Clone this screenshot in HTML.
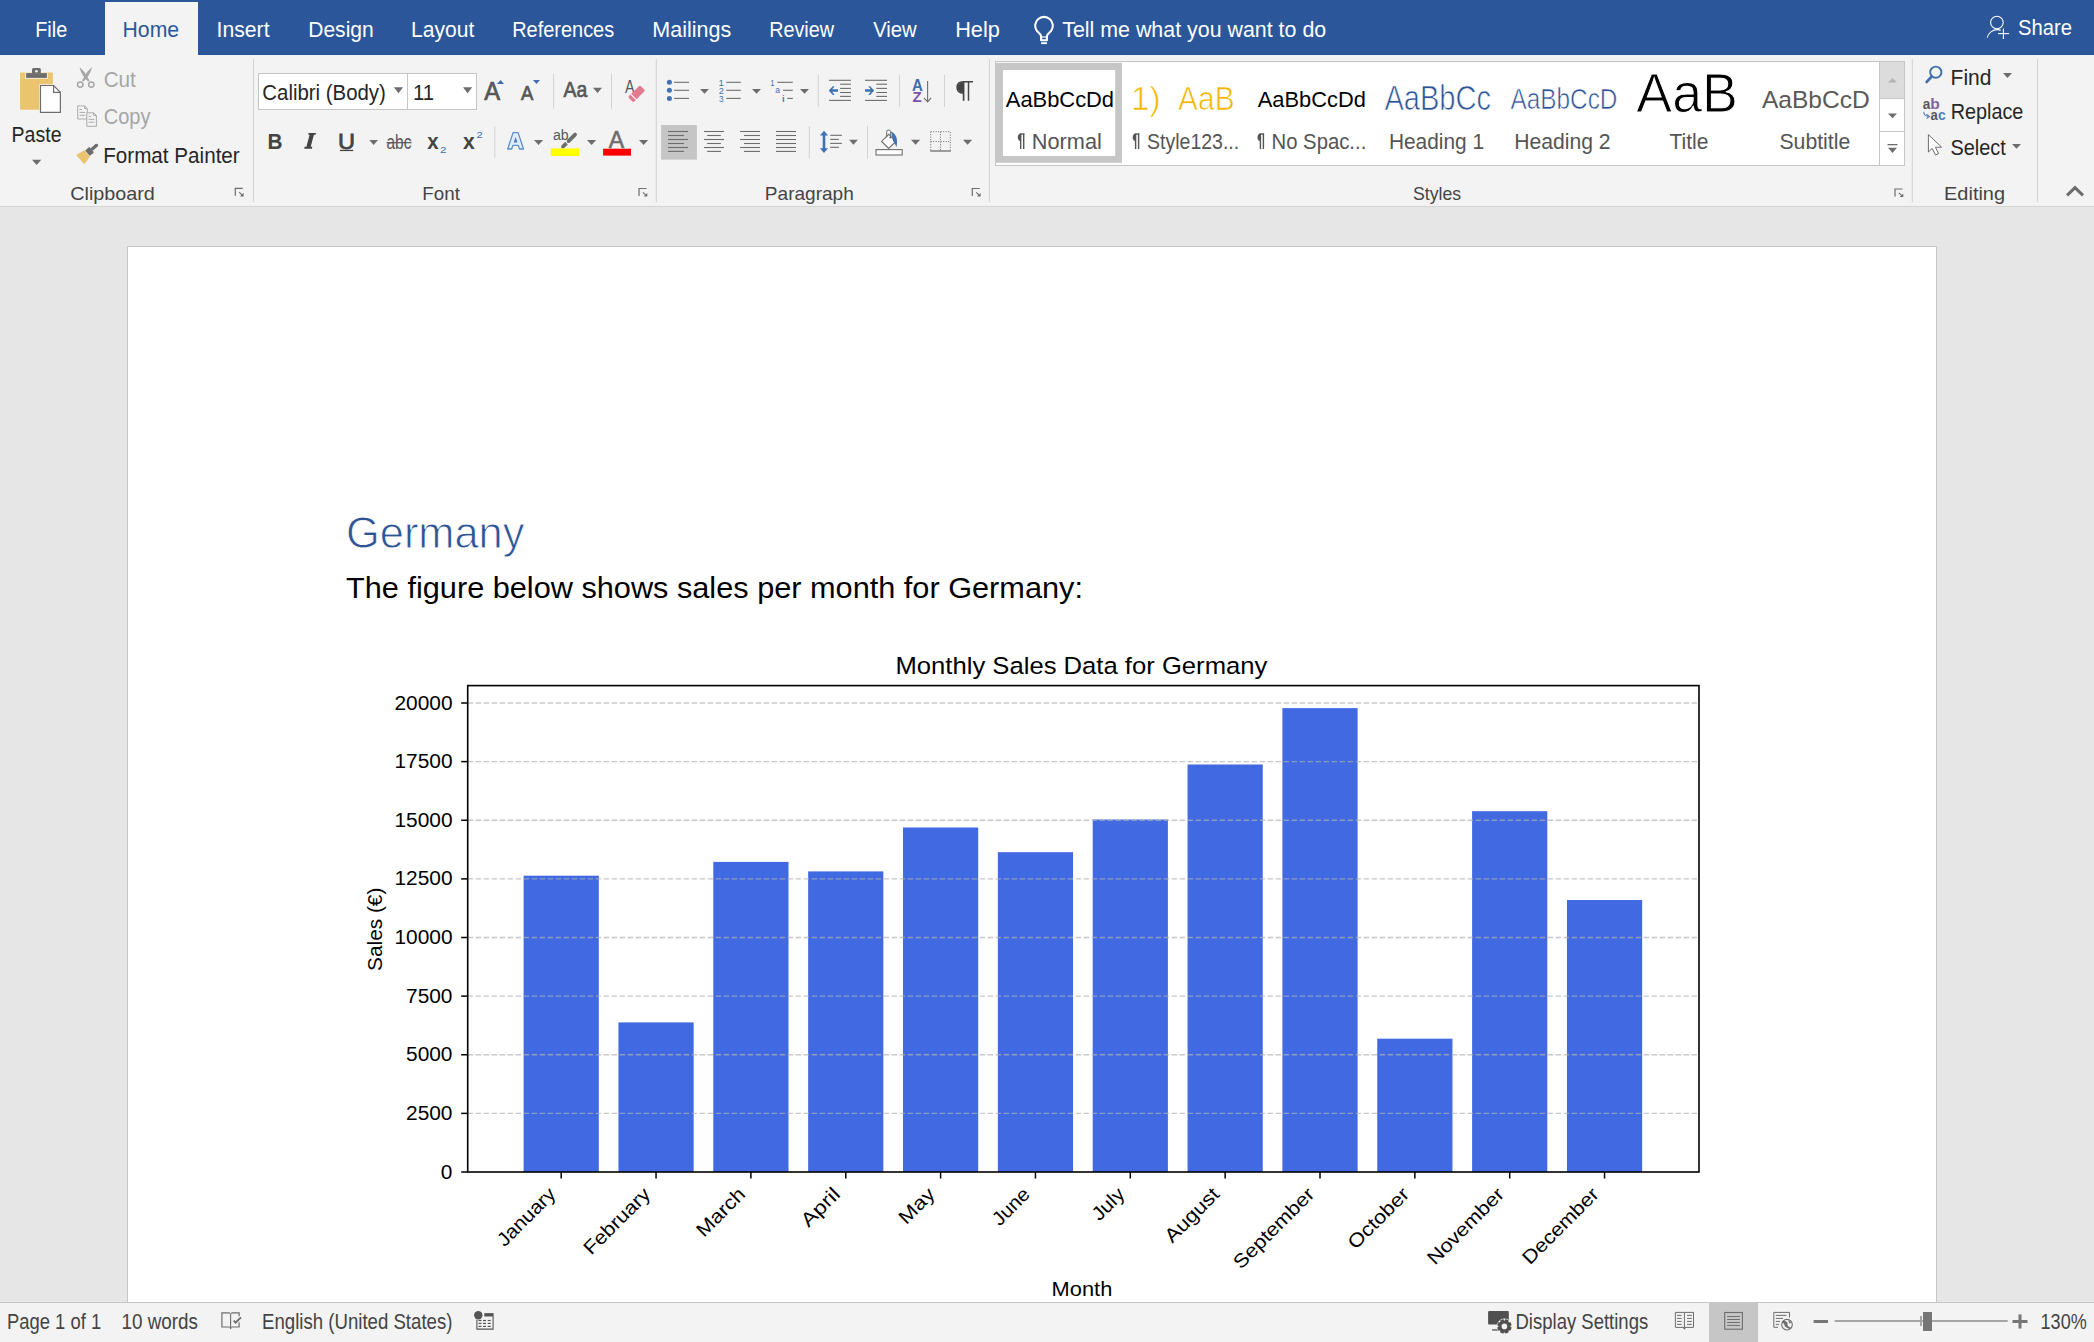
<!DOCTYPE html>
<html><head><meta charset="utf-8"><title>Word</title>
<style>html,body{margin:0;padding:0;width:2094px;height:1342px;overflow:hidden;background:#E6E6E6}
svg{display:block} text{font-family:"Liberation Sans",sans-serif;white-space:pre}</style></head>
<body><svg width="2094" height="1342" viewBox="0 0 2094 1342">
<rect x="0" y="0" width="2094" height="55" fill="#2B579A"/>
<rect x="0" y="55" width="2094" height="151" fill="#F3F3F3"/>
<rect x="105" y="2" width="93" height="53" fill="#F3F3F3"/>
<rect x="0" y="206" width="2094" height="1" fill="#D5D5D5"/>
<rect x="0" y="207" width="2094" height="1095" fill="#E6E6E6"/>
<rect x="127.5" y="246.5" width="1809" height="1100" fill="#FFFFFF" stroke="#C6C6C6" stroke-width="1"/>
<rect x="0" y="1302" width="2094" height="40" fill="#F3F3F3"/>
<rect x="0" y="1302" width="2094" height="1" fill="#C6C6C6"/>
<text x="35.24" y="37.20" font-size="22.24" fill="#FFFFFF" textLength="32.02" lengthAdjust="spacingAndGlyphs">File</text>
<text x="122.53" y="37.20" font-size="22.24" fill="#2B579A" textLength="56.58" lengthAdjust="spacingAndGlyphs">Home</text>
<text x="216.60" y="37.20" font-size="22.24" fill="#FFFFFF" textLength="52.95" lengthAdjust="spacingAndGlyphs">Insert</text>
<text x="308.25" y="37.20" font-size="22.24" fill="#FFFFFF" textLength="65.44" lengthAdjust="spacingAndGlyphs">Design</text>
<text x="411.04" y="37.20" font-size="22.24" fill="#FFFFFF" textLength="63.31" lengthAdjust="spacingAndGlyphs">Layout</text>
<text x="512.13" y="37.20" font-size="22.24" fill="#FFFFFF" textLength="102.07" lengthAdjust="spacingAndGlyphs">References</text>
<text x="652.31" y="37.20" font-size="22.24" fill="#FFFFFF" textLength="78.92" lengthAdjust="spacingAndGlyphs">Mailings</text>
<text x="769.15" y="37.20" font-size="22.24" fill="#FFFFFF" textLength="64.81" lengthAdjust="spacingAndGlyphs">Review</text>
<text x="873.20" y="37.20" font-size="22.24" fill="#FFFFFF" textLength="43.56" lengthAdjust="spacingAndGlyphs">View</text>
<text x="955.19" y="37.20" font-size="22.24" fill="#FFFFFF" textLength="44.65" lengthAdjust="spacingAndGlyphs">Help</text>
<text x="1062.22" y="37.20" font-size="22.24" fill="#FFFFFF" textLength="263.98" lengthAdjust="spacingAndGlyphs">Tell me what you want to do</text>
<text x="2017.90" y="35.30" font-size="22.53" fill="#FFFFFF" textLength="54.03" lengthAdjust="spacingAndGlyphs">Share</text>
<text x="11.61" y="141.80" font-size="21.51" fill="#262626" textLength="49.87" lengthAdjust="spacingAndGlyphs">Paste</text>
<text x="103.64" y="86.80" font-size="21.51" fill="#A6A6A6" textLength="32.26" lengthAdjust="spacingAndGlyphs">Cut</text>
<text x="103.67" y="124.40" font-size="21.51" fill="#A6A6A6" textLength="46.78" lengthAdjust="spacingAndGlyphs">Copy</text>
<text x="103.22" y="162.80" font-size="21.51" fill="#262626" textLength="136.50" lengthAdjust="spacingAndGlyphs">Format Painter</text>
<text x="70.23" y="199.80" font-size="18.60" fill="#444444" textLength="84.63" lengthAdjust="spacingAndGlyphs">Clipboard</text>
<text x="422.38" y="199.80" font-size="18.60" fill="#444444" textLength="37.54" lengthAdjust="spacingAndGlyphs">Font</text>
<text x="764.86" y="199.80" font-size="18.60" fill="#444444" textLength="88.88" lengthAdjust="spacingAndGlyphs">Paragraph</text>
<text x="1413.08" y="199.80" font-size="18.60" fill="#444444" textLength="48.12" lengthAdjust="spacingAndGlyphs">Styles</text>
<text x="1944.08" y="199.80" font-size="18.60" fill="#444444" textLength="60.93" lengthAdjust="spacingAndGlyphs">Editing</text>
<rect x="258.5" y="73.5" width="218" height="36" fill="#FFFFFF" stroke="#C6C6C6"/>
<rect x="407" y="74" width="1" height="35" fill="#C6C6C6"/>
<text x="262.37" y="99.60" font-size="22.09" fill="#262626" textLength="123.49" lengthAdjust="spacingAndGlyphs">Calibri (Body)</text>
<text x="412.88" y="99.60" font-size="22.09" fill="#262626" textLength="21.12" lengthAdjust="spacingAndGlyphs">11</text>
<text x="1950.57" y="84.60" font-size="22.53" fill="#262626" textLength="40.85" lengthAdjust="spacingAndGlyphs">Find</text>
<text x="1950.66" y="118.80" font-size="22.53" fill="#262626" textLength="72.66" lengthAdjust="spacingAndGlyphs">Replace</text>
<text x="1950.52" y="154.80" font-size="22.53" fill="#262626" textLength="55.23" lengthAdjust="spacingAndGlyphs">Select</text>
<rect x="995.5" y="61.5" width="909" height="104" fill="#FFFFFF" stroke="#C6C6C6"/>
<rect x="996" y="62.8" width="126" height="100" fill="#C6C6C6"/>
<rect x="1003" y="70" width="112.2" height="86" fill="#FFFFFF"/>
<rect x="1879.5" y="61.5" width="25" height="104" fill="#FFFFFF" stroke="#C6C6C6"/>
<rect x="1880" y="62" width="24" height="36" fill="#DCDCDC"/>
<rect x="1880" y="98" width="24" height="1" fill="#C6C6C6"/>
<rect x="1880" y="131" width="24" height="1" fill="#C6C6C6"/>
<text x="1005.80" y="106.80" font-size="22.97" fill="#000" textLength="108.25" lengthAdjust="spacingAndGlyphs">AaBbCcDd</text>
<text x="1130.93" y="110.00" font-size="33.87" fill="#F4B400" textLength="29.65" lengthAdjust="spacingAndGlyphs" stroke="#FFFFFF" stroke-width="0.7">1)</text>
<text x="1178.10" y="110.00" font-size="33.87" fill="#F4B400" textLength="56.59" lengthAdjust="spacingAndGlyphs" stroke="#FFFFFF" stroke-width="0.7">AaB</text>
<text x="1257.80" y="106.80" font-size="22.97" fill="#000" textLength="108.05" lengthAdjust="spacingAndGlyphs">AaBbCcDd</text>
<text x="1384.40" y="110.20" font-size="34.16" fill="#2F5496" textLength="106.66" lengthAdjust="spacingAndGlyphs" stroke="#FFFFFF" stroke-width="0.7">AaBbCc</text>
<text x="1510.50" y="108.80" font-size="28.63" fill="#2F5496" textLength="106.94" lengthAdjust="spacingAndGlyphs" stroke="#FFFFFF" stroke-width="0.6">AaBbCcD</text>
<text x="1636.36" y="111.50" font-size="56.10" fill="#000" textLength="101.47" lengthAdjust="spacingAndGlyphs" stroke="#FFFFFF" stroke-width="1.0">AaB</text>
<text x="1761.90" y="107.50" font-size="24.71" fill="#595959" textLength="107.86" lengthAdjust="spacingAndGlyphs">AaBbCcD</text>
<path d="M1020.70 133.40 L1020.70 141.00 C1016.80 141.00 1016.80 133.40 1020.70 133.40 Z" fill="#555555"/><rect x="1020.00" y="133.40" width="1.4" height="15.60" fill="#555555"/><rect x="1023.00" y="133.40" width="1.4" height="15.60" fill="#555555"/><rect x="1020.70" y="133.40" width="3.70" height="1.3" fill="#555555"/>
<text x="1031.75" y="149.00" font-size="22.97" fill="#555555" textLength="70.09" lengthAdjust="spacingAndGlyphs">Normal</text>
<path d="M1135.60 133.40 L1135.60 141.00 C1131.70 141.00 1131.70 133.40 1135.60 133.40 Z" fill="#555555"/><rect x="1134.90" y="133.40" width="1.4" height="15.60" fill="#555555"/><rect x="1137.90" y="133.40" width="1.4" height="15.60" fill="#555555"/><rect x="1135.60" y="133.40" width="3.70" height="1.3" fill="#555555"/>
<text x="1147.05" y="149.00" font-size="22.97" fill="#555555" textLength="92.10" lengthAdjust="spacingAndGlyphs">Style123...</text>
<path d="M1260.40 133.40 L1260.40 141.00 C1256.50 141.00 1256.50 133.40 1260.40 133.40 Z" fill="#555555"/><rect x="1259.70" y="133.40" width="1.4" height="15.60" fill="#555555"/><rect x="1262.70" y="133.40" width="1.4" height="15.60" fill="#555555"/><rect x="1260.40" y="133.40" width="3.70" height="1.3" fill="#555555"/>
<text x="1271.56" y="149.00" font-size="22.97" fill="#555555" textLength="94.73" lengthAdjust="spacingAndGlyphs">No Spac...</text>
<text x="1388.91" y="149.00" font-size="22.97" fill="#555555" textLength="95.10" lengthAdjust="spacingAndGlyphs">Heading 1</text>
<text x="1514.19" y="149.00" font-size="22.97" fill="#555555" textLength="96.44" lengthAdjust="spacingAndGlyphs">Heading 2</text>
<text x="1669.54" y="149.00" font-size="22.97" fill="#555555" textLength="38.96" lengthAdjust="spacingAndGlyphs">Title</text>
<text x="1779.38" y="149.00" font-size="22.97" fill="#555555" textLength="70.92" lengthAdjust="spacingAndGlyphs">Subtitle</text>
<text x="346.03" y="547.80" font-size="45.06" fill="#2F5496" textLength="178.42" lengthAdjust="spacingAndGlyphs" stroke="#FFFFFF" stroke-width="0.9">Germany</text>
<text x="346.03" y="597.70" font-size="29.80" fill="#000" textLength="736.91" lengthAdjust="spacingAndGlyphs">The figure below shows sales per month for Germany:</text>
<rect x="523.60" y="875.70" width="75.2" height="296.30" fill="#4169E1"/>
<rect x="618.45" y="1022.40" width="75.2" height="149.60" fill="#4169E1"/>
<rect x="713.30" y="861.90" width="75.2" height="310.10" fill="#4169E1"/>
<rect x="808.15" y="871.40" width="75.2" height="300.60" fill="#4169E1"/>
<rect x="903.00" y="827.50" width="75.2" height="344.50" fill="#4169E1"/>
<rect x="997.85" y="852.20" width="75.2" height="319.80" fill="#4169E1"/>
<rect x="1092.70" y="819.50" width="75.2" height="352.50" fill="#4169E1"/>
<rect x="1187.55" y="764.50" width="75.2" height="407.50" fill="#4169E1"/>
<rect x="1282.40" y="708.10" width="75.2" height="463.90" fill="#4169E1"/>
<rect x="1377.25" y="1038.70" width="75.2" height="133.30" fill="#4169E1"/>
<rect x="1472.10" y="811.20" width="75.2" height="360.80" fill="#4169E1"/>
<rect x="1566.95" y="900.00" width="75.2" height="272.00" fill="#4169E1"/>
<line x1="461.20" y1="1172.00" x2="467.70" y2="1172.00" stroke="#000" stroke-width="1.5"/>
<text x="452.50" y="1178.60" font-size="19.3" text-anchor="end" textLength="11.61" lengthAdjust="spacingAndGlyphs" fill="#000">0</text>
<line x1="467.70" y1="1113.38" x2="1699.00" y2="1113.38" stroke="#B0B0B0" stroke-opacity="0.7" stroke-width="1.45" stroke-dasharray="5.4 2.6"/>
<line x1="461.20" y1="1113.38" x2="467.70" y2="1113.38" stroke="#000" stroke-width="1.5"/>
<text x="452.50" y="1119.97" font-size="19.3" text-anchor="end" textLength="46.45" lengthAdjust="spacingAndGlyphs" fill="#000">2500</text>
<line x1="467.70" y1="1054.75" x2="1699.00" y2="1054.75" stroke="#B0B0B0" stroke-opacity="0.7" stroke-width="1.45" stroke-dasharray="5.4 2.6"/>
<line x1="461.20" y1="1054.75" x2="467.70" y2="1054.75" stroke="#000" stroke-width="1.5"/>
<text x="452.50" y="1061.35" font-size="19.3" text-anchor="end" textLength="46.45" lengthAdjust="spacingAndGlyphs" fill="#000">5000</text>
<line x1="467.70" y1="996.12" x2="1699.00" y2="996.12" stroke="#B0B0B0" stroke-opacity="0.7" stroke-width="1.45" stroke-dasharray="5.4 2.6"/>
<line x1="461.20" y1="996.12" x2="467.70" y2="996.12" stroke="#000" stroke-width="1.5"/>
<text x="452.50" y="1002.73" font-size="19.3" text-anchor="end" textLength="46.45" lengthAdjust="spacingAndGlyphs" fill="#000">7500</text>
<line x1="467.70" y1="937.50" x2="1699.00" y2="937.50" stroke="#B0B0B0" stroke-opacity="0.7" stroke-width="1.45" stroke-dasharray="5.4 2.6"/>
<line x1="461.20" y1="937.50" x2="467.70" y2="937.50" stroke="#000" stroke-width="1.5"/>
<text x="452.50" y="944.10" font-size="19.3" text-anchor="end" textLength="58.06" lengthAdjust="spacingAndGlyphs" fill="#000">10000</text>
<line x1="467.70" y1="878.88" x2="1699.00" y2="878.88" stroke="#B0B0B0" stroke-opacity="0.7" stroke-width="1.45" stroke-dasharray="5.4 2.6"/>
<line x1="461.20" y1="878.88" x2="467.70" y2="878.88" stroke="#000" stroke-width="1.5"/>
<text x="452.50" y="885.48" font-size="19.3" text-anchor="end" textLength="58.06" lengthAdjust="spacingAndGlyphs" fill="#000">12500</text>
<line x1="467.70" y1="820.25" x2="1699.00" y2="820.25" stroke="#B0B0B0" stroke-opacity="0.7" stroke-width="1.45" stroke-dasharray="5.4 2.6"/>
<line x1="461.20" y1="820.25" x2="467.70" y2="820.25" stroke="#000" stroke-width="1.5"/>
<text x="452.50" y="826.85" font-size="19.3" text-anchor="end" textLength="58.06" lengthAdjust="spacingAndGlyphs" fill="#000">15000</text>
<line x1="467.70" y1="761.62" x2="1699.00" y2="761.62" stroke="#B0B0B0" stroke-opacity="0.7" stroke-width="1.45" stroke-dasharray="5.4 2.6"/>
<line x1="461.20" y1="761.62" x2="467.70" y2="761.62" stroke="#000" stroke-width="1.5"/>
<text x="452.50" y="768.23" font-size="19.3" text-anchor="end" textLength="58.06" lengthAdjust="spacingAndGlyphs" fill="#000">17500</text>
<line x1="467.70" y1="703.00" x2="1699.00" y2="703.00" stroke="#B0B0B0" stroke-opacity="0.7" stroke-width="1.45" stroke-dasharray="5.4 2.6"/>
<line x1="461.20" y1="703.00" x2="467.70" y2="703.00" stroke="#000" stroke-width="1.5"/>
<text x="452.50" y="709.60" font-size="19.3" text-anchor="end" textLength="58.06" lengthAdjust="spacingAndGlyphs" fill="#000">20000</text>
<rect x="467.70" y="685.60" width="1231.30" height="486.40" fill="none" stroke="#000" stroke-width="1.6"/>
<line x1="561.20" y1="1172.00" x2="561.20" y2="1178.50" stroke="#000" stroke-width="1.5"/>
<text transform="translate(556.73,1195.43) rotate(-45)" x="0" y="0" font-size="19.3" text-anchor="end" textLength="73.69" lengthAdjust="spacingAndGlyphs" fill="#000">January</text>
<line x1="656.05" y1="1172.00" x2="656.05" y2="1178.50" stroke="#000" stroke-width="1.5"/>
<text transform="translate(651.58,1195.43) rotate(-45)" x="0" y="0" font-size="19.3" text-anchor="end" textLength="85.37" lengthAdjust="spacingAndGlyphs" fill="#000">February</text>
<line x1="750.90" y1="1172.00" x2="750.90" y2="1178.50" stroke="#000" stroke-width="1.5"/>
<text transform="translate(746.43,1195.43) rotate(-45)" x="0" y="0" font-size="19.3" text-anchor="end" textLength="60.13" lengthAdjust="spacingAndGlyphs" fill="#000">March</text>
<line x1="845.75" y1="1172.00" x2="845.75" y2="1178.50" stroke="#000" stroke-width="1.5"/>
<text transform="translate(841.28,1195.43) rotate(-45)" x="0" y="0" font-size="19.3" text-anchor="end" textLength="46.21" lengthAdjust="spacingAndGlyphs" fill="#000">April</text>
<line x1="940.60" y1="1172.00" x2="940.60" y2="1178.50" stroke="#000" stroke-width="1.5"/>
<text transform="translate(936.13,1195.43) rotate(-45)" x="0" y="0" font-size="19.3" text-anchor="end" textLength="42.23" lengthAdjust="spacingAndGlyphs" fill="#000">May</text>
<line x1="1035.45" y1="1172.00" x2="1035.45" y2="1178.50" stroke="#000" stroke-width="1.5"/>
<text transform="translate(1030.98,1195.43) rotate(-45)" x="0" y="0" font-size="19.3" text-anchor="end" textLength="44.24" lengthAdjust="spacingAndGlyphs" fill="#000">June</text>
<line x1="1130.30" y1="1172.00" x2="1130.30" y2="1178.50" stroke="#000" stroke-width="1.5"/>
<text transform="translate(1125.83,1195.43) rotate(-45)" x="0" y="0" font-size="19.3" text-anchor="end" textLength="37.32" lengthAdjust="spacingAndGlyphs" fill="#000">July</text>
<line x1="1225.15" y1="1172.00" x2="1225.15" y2="1178.50" stroke="#000" stroke-width="1.5"/>
<text transform="translate(1220.68,1195.43) rotate(-45)" x="0" y="0" font-size="19.3" text-anchor="end" textLength="68.37" lengthAdjust="spacingAndGlyphs" fill="#000">August</text>
<line x1="1320.00" y1="1172.00" x2="1320.00" y2="1178.50" stroke="#000" stroke-width="1.5"/>
<text transform="translate(1315.53,1195.43) rotate(-45)" x="0" y="0" font-size="19.3" text-anchor="end" textLength="105.37" lengthAdjust="spacingAndGlyphs" fill="#000">September</text>
<line x1="1414.85" y1="1172.00" x2="1414.85" y2="1178.50" stroke="#000" stroke-width="1.5"/>
<text transform="translate(1410.38,1195.43) rotate(-45)" x="0" y="0" font-size="19.3" text-anchor="end" textLength="77.54" lengthAdjust="spacingAndGlyphs" fill="#000">October</text>
<line x1="1509.70" y1="1172.00" x2="1509.70" y2="1178.50" stroke="#000" stroke-width="1.5"/>
<text transform="translate(1505.23,1195.43) rotate(-45)" x="0" y="0" font-size="19.3" text-anchor="end" textLength="99.44" lengthAdjust="spacingAndGlyphs" fill="#000">November</text>
<line x1="1604.55" y1="1172.00" x2="1604.55" y2="1178.50" stroke="#000" stroke-width="1.5"/>
<text transform="translate(1600.08,1195.43) rotate(-45)" x="0" y="0" font-size="19.3" text-anchor="end" textLength="99.14" lengthAdjust="spacingAndGlyphs" fill="#000">December</text>
<text x="895.49" y="673.70" font-size="24.13" fill="#000" textLength="371.85" lengthAdjust="spacingAndGlyphs">Monthly Sales Data for Germany</text>
<text x="1051.62" y="1295.50" font-size="19.62" fill="#000" textLength="60.69" lengthAdjust="spacingAndGlyphs">Month</text>
<text transform="translate(381.5,929.3) rotate(-90)" x="0" y="0" font-size="19.3" text-anchor="middle" textLength="83.23" lengthAdjust="spacingAndGlyphs" fill="#000">Sales (€)</text>
<text x="6.92" y="1328.50" font-size="21.80" fill="#444444" textLength="94.24" lengthAdjust="spacingAndGlyphs">Page 1 of 1</text>
<text x="121.48" y="1328.50" font-size="21.80" fill="#444444" textLength="76.47" lengthAdjust="spacingAndGlyphs">10 words</text>
<text x="262.00" y="1328.50" font-size="21.80" fill="#444444" textLength="190.42" lengthAdjust="spacingAndGlyphs">English (United States)</text>
<text x="1515.51" y="1328.50" font-size="21.80" fill="#444444" textLength="132.70" lengthAdjust="spacingAndGlyphs">Display Settings</text>
<text x="2040.55" y="1328.50" font-size="21.80" fill="#444444" textLength="46.19" lengthAdjust="spacingAndGlyphs">130%</text>
<rect x="1709" y="1303" width="49" height="39" fill="#C6C6C6"/>
<rect x="1834.7" y="1320" width="173" height="2" fill="#A6A6A6"/>
<rect x="1920" y="1316" width="2" height="10" fill="#A6A6A6"/>
<rect x="1923" y="1312" width="9" height="19" fill="#767676"/>
<rect x="1813.6" y="1320" width="14.4" height="3" fill="#767676"/>
<rect x="2012.5" y="1320" width="15" height="3" fill="#767676"/>
<rect x="2018.5" y="1314.4" width="3" height="14.1" fill="#767676"/>
<path d="M1041.1 40.2 L1041.1 36.2 C1040.7 34.2 1038.6 32.6 1037 31.1 A8.85 8.85 0 1 1 1051 31.1 C1049.4 32.6 1047.3 34.2 1046.9 36.2 L1046.9 40.2 Z" fill="none" stroke="#FFFFFF" stroke-width="2.1" stroke-linejoin="round"/>
<rect x="1041.1" y="36.4" width="5.8" height="1.2" fill="#FFFFFF"/>
<rect x="1041.2" y="42.2" width="5.7" height="1.9" fill="#FFFFFF"/>
<circle cx="1996.9" cy="22.5" r="6.3" fill="none" stroke="#FFFFFF" stroke-width="1.1"/>
<path d="M1987.2 37.6 C1988.5 33 1992.5 29.6 1997.5 29.6 C1998.8 29.6 1999.8 29.8 2000.8 30.2" fill="none" stroke="#FFFFFF" stroke-width="1.1"/>
<line x1="1998" y1="33.6" x2="2009.1" y2="33.6" stroke="#FFFFFF" stroke-width="1.1"/>
<line x1="2003.4" y1="28.5" x2="2003.4" y2="39" stroke="#FFFFFF" stroke-width="1.1"/>
<rect x="20.1" y="72.5" width="32.8" height="37.2" rx="1.2" fill="#EBC46F"/>
<path d="M25.1 72.6 L25.1 78.8 L47.9 78.8 L47.9 72.6 Z" fill="#F3F3F3" opacity="0.9"/>
<rect x="26.1" y="73.1" width="20.8" height="4.8" fill="#6D6D6D"/>
<path d="M32 73.2 L32 69.6 Q32 68.1 33.5 68.1 L39.3 68.1 Q40.8 68.1 40.8 69.6 L40.8 73.2 Z" fill="#6D6D6D"/>
<circle cx="36.4" cy="71.3" r="1.3" fill="#F3F3F3"/>
<path d="M39.2 84.2 L54 84.2 L61.8 92 L61.8 113.6 L39.2 113.6 Z" fill="#F3F3F3"/>
<path d="M40.5 85.5 L53.6 85.5 L60.4 92.3 L60.4 112.3 L40.5 112.3 Z" fill="#FFFFFF" stroke="#6D6D6D" stroke-width="1.2" stroke-linejoin="miter"/>
<path d="M53.6 85.5 L53.6 92.3 L60.4 92.3" fill="none" stroke="#6D6D6D" stroke-width="1.2"/>
<path d="M32.00 159.70 L41.30 159.70 L36.65 165.00 Z" fill="#6D6D6D"/>
<path d="M79.5 67.0 Q84.6 71.2 87.4 77.0 L89.6 80.4 L88.1 81.6 L85.2 78.4 Q80.8 73.4 79.5 67.0 Z" fill="#A6A6A6"/>
<path d="M92.0 67.0 Q86.9 71.2 84.1 77.0 L81.9 80.4 L83.4 81.6 L86.3 78.4 Q90.7 73.4 92.0 67.0 Z" fill="#A6A6A6"/>
<circle cx="80.2" cy="84.6" r="2.7" fill="#F3F3F3" stroke="#A6A6A6" stroke-width="1.5"/>
<circle cx="91.3" cy="84.6" r="2.7" fill="#F3F3F3" stroke="#A6A6A6" stroke-width="1.5"/>
<path d="M77.7 105.9 L84.6 105.9 L87.3 108.6 L87.3 119 L77.7 119 Z" fill="#F3F3F3" stroke="#ABABAB" stroke-width="1"/>
<path d="M79.5 109.5 L82 109.5 M79.5 112.4 L85.3 112.4 M79.5 115.3 L85.3 115.3" stroke="#ABABAB" stroke-width="1"/>
<path d="M86.8 112.8 L93.7 112.8 L96.4 115.5 L96.4 126.3 L86.8 126.3 Z" fill="#F3F3F3" stroke="#ABABAB" stroke-width="1"/>
<path d="M88.6 116.4 L91.1 116.4 M88.6 119.3 L94.4 119.3 M88.6 122.2 L94.4 122.2" stroke="#ABABAB" stroke-width="1"/>
<path d="M84.6 105.9 L84.6 108.6 L87.3 108.6 M93.7 112.8 L93.7 115.5 L96.4 115.5" fill="none" stroke="#ABABAB" stroke-width="1"/>
<g transform="translate(97.4,144.6) rotate(139)"><rect x="-0.5" y="-1.6" width="8.5" height="3.2" rx="1.6" fill="#6D6D6D"/><rect x="7.6" y="-3.6" width="5.6" height="7.2" rx="0.6" fill="#6D6D6D"/><path d="M13.6 -4.3 L22.8 -6.2 L22.8 6.2 L13.6 4.3 Z" fill="#EBC46F"/></g>
<path d="M235.30 195.80 L235.30 188.40 L242.80 188.40" fill="none" stroke="#6D6D6D" stroke-width="1.2"/><line x1="239.20" y1="192.20" x2="242.60" y2="195.60" stroke="#6D6D6D" stroke-width="1.1"/><path d="M243.60 192.80 L243.60 196.40 L240.00 196.40 Z" fill="#6D6D6D"/>
<rect x="253.00" y="59.00" width="1" height="143.00" fill="#D2D2D2"/>
<path d="M393.90 87.30 L403.10 87.30 L398.50 93.20 Z" fill="#6D6D6D"/>
<path d="M463.00 87.30 L472.20 87.30 L467.60 93.20 Z" fill="#6D6D6D"/>
<text x="484.20" y="100.00" font-size="25.15" fill="#575757" textLength="15.88" lengthAdjust="spacingAndGlyphs" stroke="#575757" stroke-width="0.7">A</text>
<path d="M497.00 84.00 L504.10 84.00 L500.55 80.00 Z" fill="#3E6FB0"/>
<text x="520.90" y="100.00" font-size="20.35" fill="#575757" textLength="12.31" lengthAdjust="spacingAndGlyphs" stroke="#575757" stroke-width="0.7">A</text>
<path d="M533.00 80.00 L540.00 80.00 L536.50 84.10 Z" fill="#3E6FB0"/>
<rect x="553.10" y="73.70" width="1" height="34.90" fill="#D2D2D2"/>
<text x="563.50" y="97.10" font-size="22.09" fill="#575757" textLength="23.72" lengthAdjust="spacingAndGlyphs" stroke="#575757" stroke-width="0.7">Aa</text>
<path d="M593.00 87.70 L602.00 87.70 L597.50 93.00 Z" fill="#6D6D6D"/>
<rect x="611.00" y="73.70" width="1" height="34.90" fill="#D2D2D2"/>
<text x="625.00" y="92.60" font-size="17.88" fill="#575757" textLength="9.51" lengthAdjust="spacingAndGlyphs">A</text>
<g transform="translate(636.6,93.8) rotate(-45)"><rect x="-8.4" y="-3.8" width="16.8" height="7.6" rx="1.4" fill="#E27A90"/><rect x="-5" y="-3.8" width="1.2" height="7.6" fill="#F3F3F3"/></g>
<text x="267.45" y="148.70" font-size="22.97" fill="#444444" font-weight="bold" textLength="14.95" lengthAdjust="spacingAndGlyphs">B</text>
<path d="M308.6 132.9 L315.9 132.9 L315.6 134.8 L313.9 134.8 L310.7 146.8 L312.3 146.8 L311.9 148.7 L304.2 148.7 L304.6 146.8 L306.4 146.8 L309.6 134.8 L308.2 134.8 Z" fill="#444444"/>
<text x="338.11" y="148.70" font-size="22.97" fill="#444444" textLength="16.99" lengthAdjust="spacingAndGlyphs" stroke="#444444" stroke-width="0.8">U</text>
<rect x="339.9" y="149.8" width="13.3" height="1.3" fill="#444444"/>
<path d="M369.30 140.00 L378.00 140.00 L373.65 144.90 Z" fill="#6D6D6D"/>
<text x="386.42" y="148.70" font-size="19.91" fill="#575757" textLength="24.97" lengthAdjust="spacingAndGlyphs">abc</text>
<rect x="386.5" y="142.1" width="25" height="1.2" fill="#575757"/>
<text x="427.26" y="148.70" font-size="21.55" fill="#444444" font-weight="bold" textLength="11.33" lengthAdjust="spacingAndGlyphs">x</text>
<text x="439.99" y="153.00" font-size="9.45" fill="#3E6FB0" textLength="6.47" lengthAdjust="spacingAndGlyphs">2</text>
<text x="462.95" y="148.70" font-size="21.55" fill="#444444" font-weight="bold" textLength="11.75" lengthAdjust="spacingAndGlyphs">x</text>
<text x="476.41" y="138.10" font-size="9.45" fill="#3E6FB0" textLength="6.22" lengthAdjust="spacingAndGlyphs">2</text>
<rect x="494.30" y="126.50" width="1" height="31.30" fill="#D2D2D2"/>
<path d="M513.1 132.6 L518.1 132.6 L523.5 149 L519.5 149 L518.3 145.4 L512.9 145.4 L511.7 149 L507.7 149 Z" fill="#E2EDF9" stroke="#5B8FD0" stroke-width="1.3" stroke-linejoin="round"/>
<path d="M515.6 137 L517.5 142.4 L513.7 142.4 Z" fill="#4A7CC0"/>
<path d="M534.00 140.00 L543.10 140.00 L538.55 144.90 Z" fill="#6D6D6D"/>
<text x="552.90" y="139.60" font-size="13.95" fill="#575757" textLength="15.68" lengthAdjust="spacingAndGlyphs">ab</text>
<g transform="translate(576.4,133.2) rotate(135)"><rect x="0" y="-1.9" width="13" height="3.8" rx="1.9" fill="#6D6D6D"/><path d="M14 -1.9 L19.5 -1.9 L21.5 0 L19.5 1.9 L14 1.9 Z" fill="#6D6D6D"/></g>
<rect x="550.8" y="148.4" width="28.2" height="7.6" fill="#FFFF00"/>
<path d="M587.00 140.00 L596.20 140.00 L591.60 144.90 Z" fill="#6D6D6D"/>
<text x="608.80" y="148.40" font-size="23.84" fill="#6D6D6D" textLength="15.39" lengthAdjust="spacingAndGlyphs" stroke="#6D6D6D" stroke-width="0.6">A</text>
<rect x="603.1" y="148.7" width="27.9" height="6.9" fill="#FF0000"/>
<path d="M639.00 140.00 L648.20 140.00 L643.60 144.90 Z" fill="#6D6D6D"/>
<path d="M639.00 195.90 L639.00 188.50 L646.50 188.50" fill="none" stroke="#6D6D6D" stroke-width="1.2"/><line x1="642.90" y1="192.30" x2="646.30" y2="195.70" stroke="#6D6D6D" stroke-width="1.1"/><path d="M647.30 192.90 L647.30 196.50 L643.70 196.50 Z" fill="#6D6D6D"/>
<rect x="655.80" y="59.00" width="1" height="143.00" fill="#D2D2D2"/>
<circle cx="669.4" cy="82.3" r="2.5" fill="#3F72B5"/>
<line x1="674.10" y1="82.30" x2="689.00" y2="82.30" stroke="#6D6D6D" stroke-width="1.1"/>
<circle cx="669.4" cy="90.3" r="2.5" fill="#3F72B5"/>
<line x1="674.10" y1="90.30" x2="689.00" y2="90.30" stroke="#6D6D6D" stroke-width="1.1"/>
<circle cx="669.4" cy="98.4" r="2.5" fill="#3F72B5"/>
<line x1="674.10" y1="98.40" x2="689.00" y2="98.40" stroke="#6D6D6D" stroke-width="1.1"/>
<path d="M700.10 89.00 L708.90 89.00 L704.50 93.80 Z" fill="#6D6D6D"/>
<text x="718.43" y="85.50" font-size="9.59" fill="#3F72B5" textLength="5.42" lengthAdjust="spacingAndGlyphs">1</text>
<line x1="726.30" y1="82.30" x2="740.80" y2="82.30" stroke="#6D6D6D" stroke-width="1.1"/>
<text x="718.72" y="93.50" font-size="9.59" fill="#3F72B5" textLength="5.10" lengthAdjust="spacingAndGlyphs">2</text>
<line x1="726.30" y1="90.30" x2="740.80" y2="90.30" stroke="#6D6D6D" stroke-width="1.1"/>
<text x="718.98" y="101.60" font-size="9.59" fill="#3F72B5" textLength="4.56" lengthAdjust="spacingAndGlyphs">3</text>
<line x1="726.30" y1="98.40" x2="740.80" y2="98.40" stroke="#6D6D6D" stroke-width="1.1"/>
<path d="M752.00 89.00 L761.00 89.00 L756.50 93.80 Z" fill="#6D6D6D"/>
<text x="770.20" y="85.60" font-size="9.59" fill="#3F72B5" textLength="4.23" lengthAdjust="spacingAndGlyphs">1</text>
<line x1="777.30" y1="82.30" x2="792.80" y2="82.30" stroke="#6D6D6D" stroke-width="1.1"/>
<text x="775.25" y="93.40" font-size="9.50" fill="#3F72B5" textLength="4.78" lengthAdjust="spacingAndGlyphs">a</text>
<line x1="783.10" y1="90.30" x2="792.80" y2="90.30" stroke="#6D6D6D" stroke-width="1.1"/>
<text x="781.85" y="101.50" font-size="9.50" fill="#3F72B5" textLength="3.16" lengthAdjust="spacingAndGlyphs">i</text>
<line x1="787.20" y1="98.40" x2="792.80" y2="98.40" stroke="#6D6D6D" stroke-width="1.1"/>
<path d="M800.00 89.00 L809.00 89.00 L804.50 93.80 Z" fill="#6D6D6D"/>
<rect x="817.80" y="75.00" width="1" height="32.00" fill="#D2D2D2"/>
<line x1="829.00" y1="80.30" x2="850.90" y2="80.30" stroke="#6D6D6D" stroke-width="1.1"/>
<line x1="829.00" y1="100.40" x2="850.90" y2="100.40" stroke="#6D6D6D" stroke-width="1.1"/>
<line x1="840.10" y1="84.20" x2="850.90" y2="84.20" stroke="#6D6D6D" stroke-width="1.1"/>
<line x1="840.10" y1="88.40" x2="850.90" y2="88.40" stroke="#6D6D6D" stroke-width="1.1"/>
<line x1="840.10" y1="92.50" x2="850.90" y2="92.50" stroke="#6D6D6D" stroke-width="1.1"/>
<line x1="840.10" y1="96.40" x2="850.90" y2="96.40" stroke="#6D6D6D" stroke-width="1.1"/>
<path d="M828.7 90.5 L832.8 86.2 L834.6 86.2 L832.2 89.2 L838 89.2 L838 91.8 L832.2 91.8 L834.6 94.9 L832.8 94.9 Z" fill="#3F72B5"/>
<line x1="865.00" y1="80.30" x2="887.00" y2="80.30" stroke="#6D6D6D" stroke-width="1.1"/>
<line x1="865.00" y1="100.40" x2="887.00" y2="100.40" stroke="#6D6D6D" stroke-width="1.1"/>
<line x1="876.30" y1="84.20" x2="887.00" y2="84.20" stroke="#6D6D6D" stroke-width="1.1"/>
<line x1="876.30" y1="88.40" x2="887.00" y2="88.40" stroke="#6D6D6D" stroke-width="1.1"/>
<line x1="876.30" y1="92.50" x2="887.00" y2="92.50" stroke="#6D6D6D" stroke-width="1.1"/>
<line x1="876.30" y1="96.40" x2="887.00" y2="96.40" stroke="#6D6D6D" stroke-width="1.1"/>
<path d="M874.2 90.5 L870.1 86.2 L868.3 86.2 L870.7 89.2 L865 89.2 L865 91.8 L870.7 91.8 L868.3 94.9 L870.1 94.9 Z" fill="#3F72B5"/>
<rect x="899.10" y="75.00" width="1" height="32.00" fill="#D2D2D2"/>
<text x="911.92" y="90.80" font-size="15.84" fill="#3E6FB0" font-weight="bold" textLength="10.83" lengthAdjust="spacingAndGlyphs">A</text>
<text x="912.46" y="101.80" font-size="14.10" fill="#7D4FB0" font-weight="bold" textLength="9.16" lengthAdjust="spacingAndGlyphs">Z</text>
<line x1="927.6" y1="81" x2="927.6" y2="101.5" stroke="#6D6D6D" stroke-width="1.1"/>
<path d="M924 97.8 L927.6 101.8 L931.1 97.8" fill="none" stroke="#6D6D6D" stroke-width="1.1"/>
<rect x="944.00" y="75.00" width="1" height="32.00" fill="#D2D2D2"/>
<path d="M973 81.8 L963.5 81.8 C959.5 81.8 957.1 84 957.1 87.5 C957.1 91 959.5 93.2 963.5 93.2 L963.5 100.8 M963.7 81.8 L963.7 100.8 M968.5 81.8 L968.5 100.8" fill="none" stroke="#444444" stroke-width="1.5"/>
<path d="M963.5 82.2 C960 82.2 957.6 84.2 957.6 87.5 C957.6 90.8 960 92.8 963.5 92.8 Z" fill="#444444"/>
<rect x="661.1" y="125" width="35.8" height="34.7" fill="#C5C5C5"/>
<line x1="668.00" y1="131.50" x2="688.00" y2="131.50" stroke="#6D6D6D" stroke-width="1.1"/>
<line x1="704.00" y1="131.50" x2="724.00" y2="131.50" stroke="#6D6D6D" stroke-width="1.1"/>
<line x1="740.00" y1="131.50" x2="760.00" y2="131.50" stroke="#6D6D6D" stroke-width="1.1"/>
<line x1="776.00" y1="131.50" x2="796.00" y2="131.50" stroke="#6D6D6D" stroke-width="1.1"/>
<line x1="668.00" y1="135.50" x2="684.00" y2="135.50" stroke="#6D6D6D" stroke-width="1.1"/>
<line x1="707.10" y1="135.50" x2="720.90" y2="135.50" stroke="#6D6D6D" stroke-width="1.1"/>
<line x1="744.00" y1="135.50" x2="760.00" y2="135.50" stroke="#6D6D6D" stroke-width="1.1"/>
<line x1="776.00" y1="135.50" x2="796.00" y2="135.50" stroke="#6D6D6D" stroke-width="1.1"/>
<line x1="668.00" y1="139.50" x2="688.00" y2="139.50" stroke="#6D6D6D" stroke-width="1.1"/>
<line x1="704.00" y1="139.50" x2="724.00" y2="139.50" stroke="#6D6D6D" stroke-width="1.1"/>
<line x1="740.00" y1="139.50" x2="760.00" y2="139.50" stroke="#6D6D6D" stroke-width="1.1"/>
<line x1="776.00" y1="139.50" x2="796.00" y2="139.50" stroke="#6D6D6D" stroke-width="1.1"/>
<line x1="668.00" y1="143.50" x2="684.00" y2="143.50" stroke="#6D6D6D" stroke-width="1.1"/>
<line x1="707.10" y1="143.50" x2="720.90" y2="143.50" stroke="#6D6D6D" stroke-width="1.1"/>
<line x1="744.00" y1="143.50" x2="760.00" y2="143.50" stroke="#6D6D6D" stroke-width="1.1"/>
<line x1="776.00" y1="143.50" x2="796.00" y2="143.50" stroke="#6D6D6D" stroke-width="1.1"/>
<line x1="668.00" y1="147.50" x2="688.00" y2="147.50" stroke="#6D6D6D" stroke-width="1.1"/>
<line x1="704.00" y1="147.50" x2="724.00" y2="147.50" stroke="#6D6D6D" stroke-width="1.1"/>
<line x1="740.00" y1="147.50" x2="760.00" y2="147.50" stroke="#6D6D6D" stroke-width="1.1"/>
<line x1="776.00" y1="147.50" x2="796.00" y2="147.50" stroke="#6D6D6D" stroke-width="1.1"/>
<line x1="668.00" y1="151.40" x2="684.00" y2="151.40" stroke="#6D6D6D" stroke-width="1.1"/>
<line x1="707.10" y1="151.40" x2="720.90" y2="151.40" stroke="#6D6D6D" stroke-width="1.1"/>
<line x1="744.00" y1="151.40" x2="760.00" y2="151.40" stroke="#6D6D6D" stroke-width="1.1"/>
<line x1="776.00" y1="151.40" x2="796.00" y2="151.40" stroke="#6D6D6D" stroke-width="1.1"/>
<rect x="808.80" y="126.00" width="1" height="32.60" fill="#D2D2D2"/>
<path d="M824 130.7 L828.1 135.5 L825.3 135.5 L825.3 148.2 L828.1 148.2 L824 153 L819.9 148.2 L822.7 148.2 L822.7 135.5 L819.9 135.5 Z" fill="#3F72B5"/>
<line x1="830.20" y1="135.30" x2="841.90" y2="135.30" stroke="#6D6D6D" stroke-width="1.1"/>
<line x1="830.20" y1="139.40" x2="838.90" y2="139.40" stroke="#6D6D6D" stroke-width="1.1"/>
<line x1="830.20" y1="143.40" x2="841.90" y2="143.40" stroke="#6D6D6D" stroke-width="1.1"/>
<line x1="830.20" y1="147.30" x2="838.90" y2="147.30" stroke="#6D6D6D" stroke-width="1.1"/>
<path d="M849.00 139.80 L857.90 139.80 L853.45 144.80 Z" fill="#6D6D6D"/>
<rect x="867.00" y="126.00" width="1" height="32.60" fill="#D2D2D2"/>
<rect x="876" y="149.6" width="26.2" height="5.4" fill="#FFFFFF" stroke="#6D6D6D" stroke-width="1.1"/>
<path d="M888.7 134.3 L895.8 141.4 L888.7 148.5 L881.6 141.4 Z" fill="#FFFFFF" stroke="#6D6D6D" stroke-width="1.1"/>
<path d="M886.7 137.5 L886.7 131.5 Q886.7 130.1 888.2 130.1 L889.2 130.1 Q890.6 130.1 890.6 131.5 L890.6 137.5" fill="none" stroke="#6D6D6D" stroke-width="1"/>
<circle cx="890.3" cy="137.6" r="1" fill="#6D6D6D"/>
<path d="M891 131.5 C895 133.5 898.5 137 896.5 147.3 C895 143 893 141 893 141 Z" fill="#3F72B5"/>
<path d="M911.00 139.80 L920.10 139.80 L915.55 144.80 Z" fill="#6D6D6D"/>
<path d="M930.7 131.7 L950.3 131.7 L950.3 150.9 M930.7 131.7 L930.7 150.9 M940.5 131.7 L940.5 150.9 M930.7 141.5 L950.3 141.5" fill="none" stroke="#6D6D6D" stroke-width="1" stroke-dasharray="1 1.5"/>
<line x1="930.20" y1="151.00" x2="950.80" y2="151.00" stroke="#6D6D6D" stroke-width="1.3"/>
<path d="M963.00 139.80 L972.20 139.80 L967.60 144.80 Z" fill="#6D6D6D"/>
<path d="M972.30 195.90 L972.30 188.50 L979.80 188.50" fill="none" stroke="#6D6D6D" stroke-width="1.2"/><line x1="976.20" y1="192.30" x2="979.60" y2="195.70" stroke="#6D6D6D" stroke-width="1.1"/><path d="M980.60 192.90 L980.60 196.50 L977.00 196.50 Z" fill="#6D6D6D"/>
<rect x="988.90" y="59.00" width="1" height="143.00" fill="#D2D2D2"/>
<path d="M1888.00 82.40 L1897.00 82.40 L1892.50 78.00 Z" fill="#B5B5B5"/>
<path d="M1888.00 113.40 L1897.00 113.40 L1892.50 118.20 Z" fill="#6D6D6D"/>
<rect x="1887.5" y="144" width="10" height="1.3" fill="#6D6D6D"/>
<path d="M1888.00 147.80 L1897.00 147.80 L1892.50 152.90 Z" fill="#6D6D6D"/>
<path d="M1895.00 196.40 L1895.00 189.00 L1902.50 189.00" fill="none" stroke="#6D6D6D" stroke-width="1.2"/><line x1="1898.90" y1="192.80" x2="1902.30" y2="196.20" stroke="#6D6D6D" stroke-width="1.1"/><path d="M1903.30 193.40 L1903.30 197.00 L1899.70 197.00 Z" fill="#6D6D6D"/>
<rect x="1911.80" y="59.00" width="1" height="143.00" fill="#D2D2D2"/>
<circle cx="1935.8" cy="72.2" r="5.6" fill="none" stroke="#4470A8" stroke-width="1.9"/>
<line x1="1931.7" y1="76.5" x2="1926.6" y2="82" stroke="#4470A8" stroke-width="2.6" stroke-linecap="round"/>
<path d="M2003.00 72.90 L2012.00 72.90 L2007.50 78.00 Z" fill="#6D6D6D"/>
<text x="1922.71" y="109.30" font-size="14.00" fill="#575757" font-weight="bold" textLength="7.58" lengthAdjust="spacingAndGlyphs">a</text>
<text x="1930.39" y="109.30" font-size="14.00" fill="#8064A2" font-weight="bold" textLength="9.53" lengthAdjust="spacingAndGlyphs">b</text>
<text x="1930.53" y="119.90" font-size="14.00" fill="#575757" font-weight="bold" textLength="7.27" lengthAdjust="spacingAndGlyphs">a</text>
<text x="1937.90" y="119.90" font-size="14.00" fill="#4F81BD" font-weight="bold" textLength="7.73" lengthAdjust="spacingAndGlyphs">c</text>
<path d="M1923.8 111.8 Q1924 116.4 1928.6 116.4" fill="none" stroke="#4F81BD" stroke-width="1.1"/>
<path d="M1926.6 114.2 L1929.4 116.4 L1926.6 118.6" fill="none" stroke="#4F81BD" stroke-width="1.1"/>
<path d="M1928.4 134.6 L1928.4 152 L1932.2 148.4 L1935.5 155 L1938.6 153.5 L1935.4 147.2 L1941.6 147.2 Z" fill="#FFFFFF" stroke="#6D6D6D" stroke-width="1" stroke-linejoin="miter"/>
<path d="M2012.00 144.10 L2021.00 144.10 L2016.50 148.80 Z" fill="#6D6D6D"/>
<rect x="2037.00" y="59.00" width="1" height="143.00" fill="#D2D2D2"/>
<path d="M2067 195.4 L2075 187.6 L2083 195.4" fill="none" stroke="#6D6D6D" stroke-width="3"/>
<path d="M229.6 1312.9 L221.9 1312.9 L221.9 1327 L229.6 1327" fill="none" stroke="#6D6D6D" stroke-width="1.2"/>
<path d="M231.6 1312.9 L239.1 1312.9 L239.1 1316.3 M239.1 1322.3 L239.1 1327 L231.6 1327" fill="none" stroke="#6D6D6D" stroke-width="1.2"/>
<path d="M229.4 1312.7 L230.6 1314.3 L231.8 1312.7" fill="none" stroke="#6D6D6D" stroke-width="1"/>
<line x1="230.6" y1="1314.2" x2="230.6" y2="1328" stroke="#6D6D6D" stroke-width="1.1"/>
<path d="M229.2 1327.2 L230.6 1329.6 L232 1327.2 Z" fill="#6D6D6D"/>
<path d="M233.7 1320.6 L235.6 1322.6 L241 1317.4" fill="none" stroke="#6D6D6D" stroke-width="2"/>
<path d="M476.9 1319.8 L476.9 1329.1 L493.1 1329.1 L493.1 1316.2" fill="none" stroke="#555" stroke-width="1.1"/>
<rect x="484.3" y="1313.1" width="9.3" height="3.4" fill="#555"/>
<circle cx="478.3" cy="1315.3" r="4.2" fill="#555"/>
<rect x="478.5" y="1319.9" width="3" height="1.2" fill="#555"/>
<rect x="483" y="1319.9" width="3" height="1.2" fill="#555"/>
<rect x="487.7" y="1319.9" width="3" height="1.2" fill="#555"/>
<rect x="478.5" y="1322.8000000000002" width="3" height="1.2" fill="#555"/>
<rect x="483" y="1322.8000000000002" width="3" height="1.2" fill="#555"/>
<rect x="487.7" y="1322.8000000000002" width="3" height="1.2" fill="#555"/>
<rect x="478.5" y="1325.8000000000002" width="3" height="1.2" fill="#555"/>
<rect x="483" y="1325.8000000000002" width="3" height="1.2" fill="#555"/>
<rect x="487.7" y="1325.8000000000002" width="3" height="1.2" fill="#555"/>
<rect x="1488.1" y="1311" width="20.7" height="13.5" rx="1" fill="#505050"/>
<rect x="1492.1" y="1329.3" width="7" height="1.3" fill="#505050"/>
<circle cx="1504.4" cy="1326.4" r="7.8" fill="#F3F3F3"/>
<g transform="translate(1504.4,1326.4)"><rect x="-1.8" y="-7.2" width="3.6" height="3.4" transform="rotate(22.5)" fill="#505050"/><rect x="-1.8" y="-7.2" width="3.6" height="3.4" transform="rotate(67.5)" fill="#505050"/><rect x="-1.8" y="-7.2" width="3.6" height="3.4" transform="rotate(112.5)" fill="#505050"/><rect x="-1.8" y="-7.2" width="3.6" height="3.4" transform="rotate(157.5)" fill="#505050"/><rect x="-1.8" y="-7.2" width="3.6" height="3.4" transform="rotate(202.5)" fill="#505050"/><rect x="-1.8" y="-7.2" width="3.6" height="3.4" transform="rotate(247.5)" fill="#505050"/><rect x="-1.8" y="-7.2" width="3.6" height="3.4" transform="rotate(292.5)" fill="#505050"/><rect x="-1.8" y="-7.2" width="3.6" height="3.4" transform="rotate(337.5)" fill="#505050"/><circle r="4.4" fill="none" stroke="#505050" stroke-width="3.2"/></g>
<path d="M1675.4 1312.4 L1684.4 1312.4 L1684.4 1327.4 L1675.4 1327.4 Z M1684.4 1312.4 L1693.5 1312.4 L1693.5 1327.4 L1684.4 1327.4" fill="none" stroke="#6D6D6D" stroke-width="1"/>
<path d="M1682.6 1327.6 L1684.4 1329.8 L1686.2 1327.6 Z" fill="#6D6D6D"/>
<line x1="1677.00" y1="1315.40" x2="1681.70" y2="1315.40" stroke="#6D6D6D" stroke-width="1"/>
<line x1="1687.00" y1="1315.40" x2="1691.90" y2="1315.40" stroke="#6D6D6D" stroke-width="1"/>
<line x1="1677.00" y1="1318.40" x2="1681.70" y2="1318.40" stroke="#6D6D6D" stroke-width="1"/>
<line x1="1687.00" y1="1318.40" x2="1691.90" y2="1318.40" stroke="#6D6D6D" stroke-width="1"/>
<line x1="1677.00" y1="1321.40" x2="1681.70" y2="1321.40" stroke="#6D6D6D" stroke-width="1"/>
<line x1="1687.00" y1="1321.40" x2="1691.90" y2="1321.40" stroke="#6D6D6D" stroke-width="1"/>
<line x1="1677.00" y1="1324.40" x2="1681.70" y2="1324.40" stroke="#6D6D6D" stroke-width="1"/>
<line x1="1687.00" y1="1324.40" x2="1691.90" y2="1324.40" stroke="#6D6D6D" stroke-width="1"/>
<rect x="1724.7" y="1312.5" width="17.7" height="16.7" fill="none" stroke="#6D6D6D" stroke-width="1.1"/>
<line x1="1727.20" y1="1316.50" x2="1739.90" y2="1316.50" stroke="#6D6D6D" stroke-width="1"/>
<line x1="1727.20" y1="1319.50" x2="1739.90" y2="1319.50" stroke="#6D6D6D" stroke-width="1"/>
<line x1="1727.20" y1="1322.50" x2="1739.90" y2="1322.50" stroke="#6D6D6D" stroke-width="1"/>
<line x1="1727.20" y1="1325.40" x2="1739.90" y2="1325.40" stroke="#6D6D6D" stroke-width="1"/>
<path d="M1778 1327.3 L1773.8 1327.3 L1773.8 1312.4 L1789.5 1312.4 L1789.5 1317.5" fill="none" stroke="#6D6D6D" stroke-width="1"/>
<line x1="1775.80" y1="1315.40" x2="1786.50" y2="1315.40" stroke="#6D6D6D" stroke-width="1"/>
<line x1="1775.80" y1="1318.40" x2="1783.00" y2="1318.40" stroke="#6D6D6D" stroke-width="1"/>
<line x1="1775.80" y1="1321.40" x2="1780.00" y2="1321.40" stroke="#6D6D6D" stroke-width="1"/>
<line x1="1775.80" y1="1324.40" x2="1779.00" y2="1324.40" stroke="#6D6D6D" stroke-width="1"/>
<circle cx="1787" cy="1324.7" r="6.5" fill="#F3F3F3"/>
<circle cx="1787" cy="1324.7" r="5.3" fill="none" stroke="#6D6D6D" stroke-width="1.1"/>
<path d="M1784 1320.5 C1786 1321.5 1788 1322 1787.5 1324 C1787 1326 1789 1327 1791.5 1328 L1790.5 1329 C1788 1328.5 1784.5 1327 1784.5 1325 C1784.5 1323.5 1782.5 1322.5 1782 1322 Z M1788 1320 L1791.5 1322.5 L1789.5 1323.5 Z" fill="#6D6D6D"/>
</svg></body></html>
